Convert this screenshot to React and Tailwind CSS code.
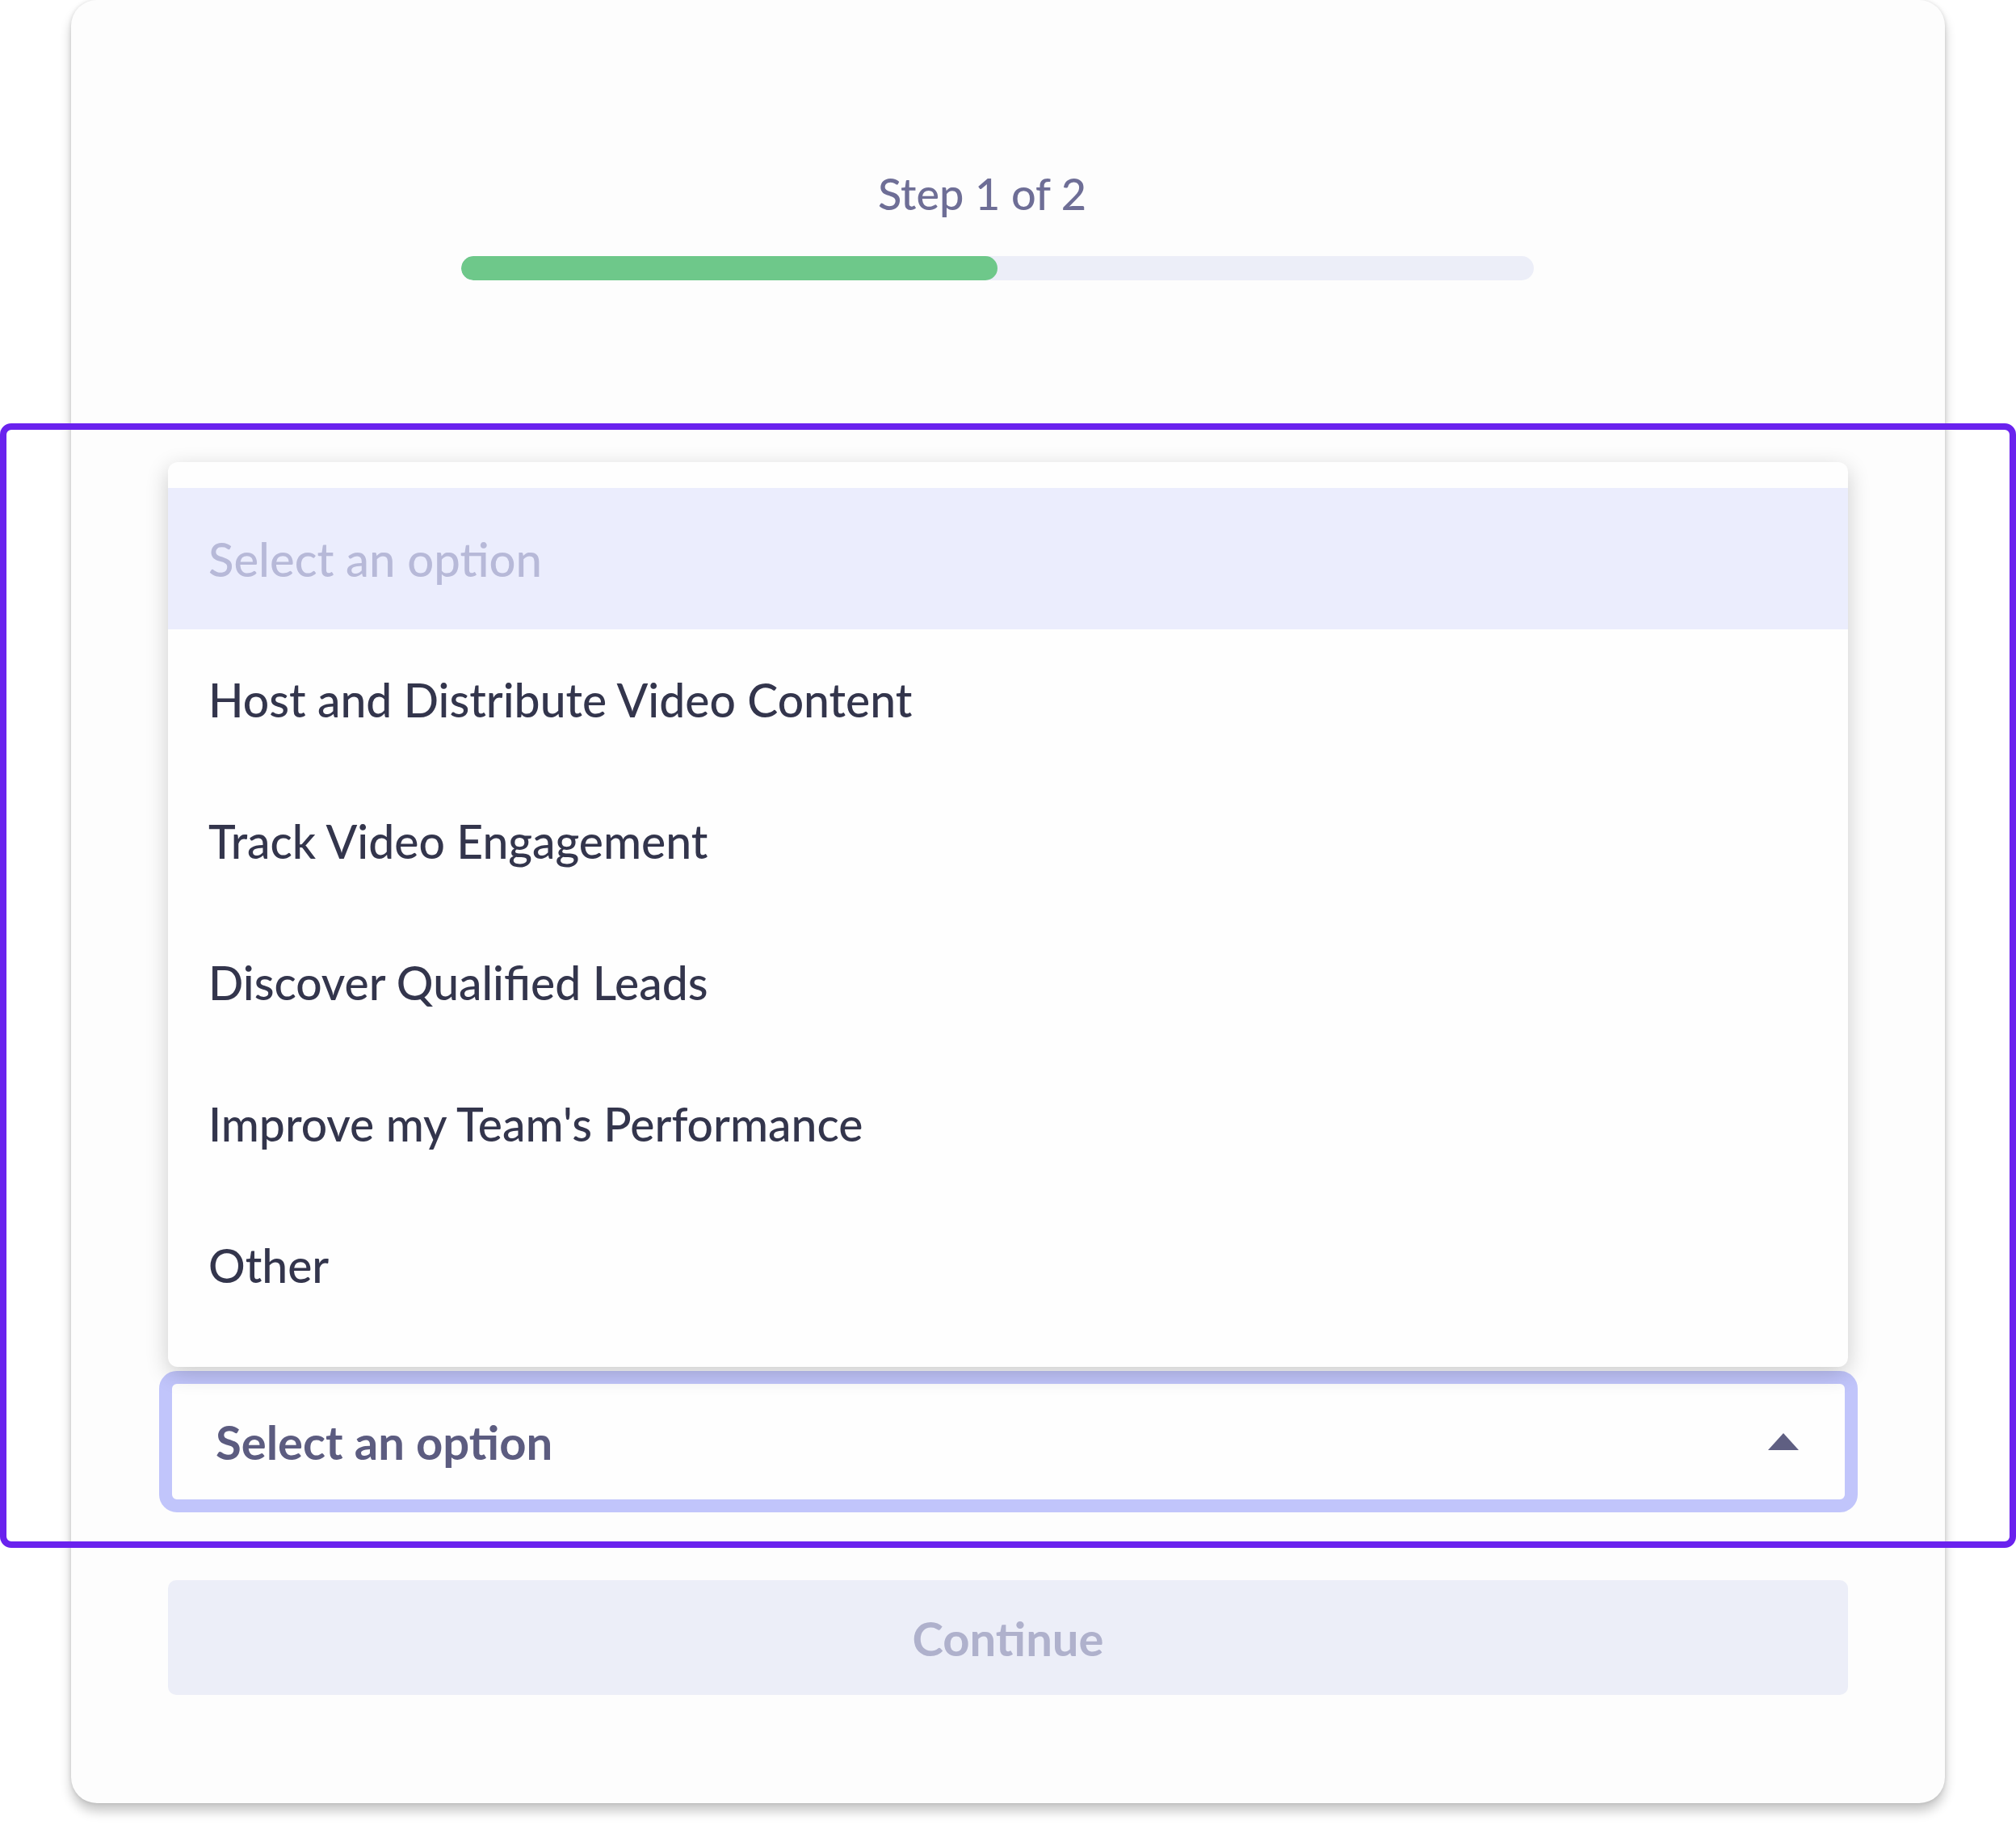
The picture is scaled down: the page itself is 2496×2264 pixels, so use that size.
import React from "react";

const options = [
  "Host and Distribute Video Content",
  "Track Video Engagement",
  "Discover Qualified Leads",
  "Improve my Team's Performance",
  "Other",
];

const App = () => {
  return (
    <div className="relative w-[2496px] h-[2264px] bg-white overflow-hidden font-['Lato','Liberation_Sans',sans-serif]">
      {/* Card */}
      <div className="ml-[88px] w-[2320px] h-[2232px] bg-[#fdfdfd] rounded-[32px] shadow-[0_10px_14px_rgba(0,0,0,0.22),0_0_5px_rgba(0,0,0,0.12)] flex flex-col">
        {/* Step header */}
        <div className="pt-[208px] h-[272px]">
          <p className="ml-[979px] w-[298px] text-center text-[54px] leading-[64px] font-medium text-[#6e6e96] whitespace-nowrap">
            Step 1 of 2
          </p>
        </div>
        <div className="mt-[45px] ml-[483px] w-[1328px] h-[30px] rounded-full bg-[#eceef8] overflow-hidden">
          <div className="w-1/2 h-full rounded-full bg-[#6ec88a]" />
        </div>

        {/* Open dropdown menu */}
        <div className="relative z-10 mt-[225px] ml-[120px] w-[2080px] bg-[#fefefe] rounded-[12px] pt-[32px] pb-[38px] shadow-[0_8px_28px_rgba(0,0,0,0.2)]">
          <div className="h-[175px] flex items-center pl-[50px] bg-[#ebedfd] text-[58px] font-medium text-[#b7b9d8]">
            Select an option
          </div>
          {options.map((opt) => (
            <div
              key={opt}
              className="h-[175px] flex items-center pl-[50px] text-[57px] font-medium text-[#33354c]"
            >
              {opt}
            </div>
          ))}
        </div>

        {/* Select box (focused) */}
        <div className="mt-[5px] ml-[109px] w-[2103px] h-[175px] rounded-[22px] border-[16px] border-[#c1c5fb] bg-[#fefefe] flex items-center justify-between pl-[54px] pr-[57px]">
          <span className="text-[58px] font-bold text-[#5c5c80]">Select an option</span>
          <svg width="38" height="21" viewBox="0 0 38 21">
            <path d="M19 0 L38 21 L0 21 Z" fill="#5f5f82" />
          </svg>
        </div>

        {/* Continue */}
        <button className="mt-[84px] ml-[120px] w-[2080px] h-[142px] rounded-[10px] bg-[#eceef8] text-[58px] font-bold text-[#afb1cc]">
          Continue
        </button>
      </div>

      {/* Highlight outline */}
      <div className="absolute left-0 top-[524px] w-[2496px] h-[1392px] border-[8px] border-[#6a22ee] rounded-[14px] pointer-events-none" />
    </div>
  );
};

export default App;
